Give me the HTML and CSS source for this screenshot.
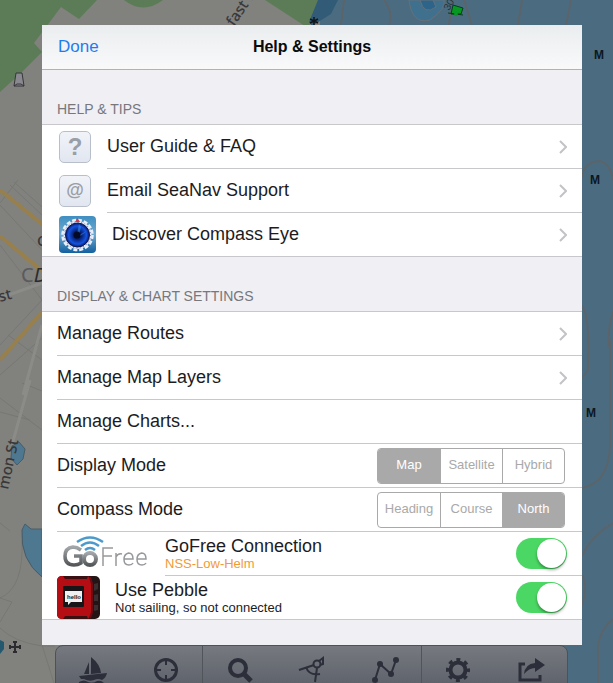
FILE: index.html
```html
<!DOCTYPE html>
<html lang="en">
<head>
    <meta charset="UTF-8">
    <meta name="viewport" content="width=device-width, initial-scale=1.0">
    <title>Help &amp; Settings</title>
    <link rel="stylesheet" href="styles.css">
</head>
<body>
    <!-- Chart behind the panel -->
    <svg class="map" viewBox="0 0 613 683" preserveAspectRatio="xMidYMid slice" aria-hidden="true">
        <rect width="613" height="683" fill="#81817d"/>
        <path d="M320 0H613V683H320Z" fill="#4b6c80"/>
        <path class="park" d="M0 0H97L79 19L61 7L34 43L42 52L22 72L0 92Z"/>
        <path class="park" d="M124 0Q143 15 163 0ZM265 0H322L308 28Z"/>
        <path d="M318 0H338L331 14L312 26L309 22Z" fill="#315b77"/>
        <path d="M409 0Q412 25 430 20Q446 9 444 0Z" fill="#3f718f" stroke="#667078"/>
        <path d="M420 0Q424 16 436 7L433 0Z" fill="#2d6489" stroke="#667078"/>
        <g class="depth">
            <path d="M344 0L341 25M384 0Q394 14 389 25M452 0L449 25M464 0L472 25M522 0L518 25M571 0L566 25"/>
            <path d="M582 178Q583 162 600 161Q610 163 613 180M582 306Q590 314 588 370L582 378M610 340V445Q609 483 582 488M582 556Q591 536 613 523M582 575Q588 585 582 606M613 619Q598 632 598 650V683M613 312Q607 330 609 348"/>
        </g>
        <g class="street">
            <path d="M10 185L42 215M0 205L42 250M18 180L0 203M0 245L42 300M0 345L42 300M0 375L42 338M0 398L42 430M22 383L42 391M0 412L30 420M0 523L10 531M22 540Q24 588 0 598L12 602L0 622M0 628Q14 642 42 646H55M42 645L54 683M14 182L42 207M8 335L42 360"/>
        </g>
        <path class="lane" d="M30 380L12 445M42 325L23 395M0 298L42 283"/>
        <g class="road">
            <path d="M0 190L42 224M0 236L42 271M0 360L42 312"/>
        </g>
        <path class="lake" d="M12 446L19 442L25 449L23 459L17 465L11 458Z"/>
        <path class="lake" d="M22 530L25 524L31 529H42V577Q20 560 22 530Z"/>
        <path d="M0 640L4 642V649L0 654Z" fill="#24586f"/>
        <path d="M16 73H22L24 86H14ZM14 86L17 84H21L24 86" fill="#8b8990" stroke="#35353a"/>
        <path d="M15 642V652M10 647H20M13 642H17M13 652H17M10 645V649M20 645V649" stroke="#2c2c30" stroke-width="2"/>
        <path d="M314 17V25M310 19L318 23M318 19L310 23" stroke="#10161a" stroke-width="1.5"/>
        <path d="M453 5L463 8L461 14H451Z" fill="#079723" stroke="#053d1b"/>
        <path d="M448 13L463 15" stroke="#053d1b"/>
        <circle cx="456" cy="14" r="2" fill="#079723"/>
        <g class="place">
            <text x="234" y="27" transform="rotate(-56 234 27)">fast R</text>
            <text x="0" y="302" transform="rotate(-15 0 302)">st</text>
            <text x="8" y="490" transform="rotate(-78 8 490)">mon St</text>
            <text x="37" y="246">C</text>
            <text x="21" y="282" class="place-big">C<tspan class="place-dark">D</tspan></text>
        </g>
        <text x="449" y="11" class="sounding" transform="rotate(-60 449 11)">30</text>
        <text x="594" y="59" class="mud">M</text>
        <text x="590" y="184" class="mud">M</text>
        <text x="586" y="417" class="mud">M</text>
    </svg>

    <div class="screen">
        <main class="panel">
            <header class="panel-header">
                <button type="button" class="done">Done</button>
                <h1>Help &amp; Settings</h1>
            </header>

            <section>
                <h2>HELP &amp; TIPS</h2>
                <ul class="list">
                    <li class="row row-icon">
                        <span class="key" aria-hidden="true">?</span>
                        <a href="#guide" class="row-body">User Guide &amp; FAQ
                            <svg class="chevron" viewBox="0 0 8 14"><path d="M1 1L7 7L1 13"/></svg>
                        </a>
                    </li>
                    <li class="row row-icon">
                        <span class="key key-at" aria-hidden="true">@</span>
                        <a href="#support" class="row-body">Email SeaNav Support
                            <svg class="chevron" viewBox="0 0 8 14"><path d="M1 1L7 7L1 13"/></svg>
                        </a>
                    </li>
                    <li class="row row-icon">
                        <svg class="app-icon" viewBox="0 0 37 37" aria-hidden="true">
                            <defs>
                                <linearGradient id="sky" x1="0" y1="0" x2="0" y2="1">
                                    <stop offset="0" stop-color="#3f8fc0"/>
                                    <stop offset=".5" stop-color="#6fa9cf"/>
                                    <stop offset="1" stop-color="#12609f"/>
                                </linearGradient>
                                <radialGradient id="iris">
                                    <stop offset="0" stop-color="#020724"/>
                                    <stop offset=".35" stop-color="#061f77"/>
                                    <stop offset=".75" stop-color="#1453e0"/>
                                    <stop offset="1" stop-color="#081a6e"/>
                                </radialGradient>
                            </defs>
                            <rect width="37" height="37" rx="4" fill="url(#sky)"/>
                            <circle cx="18.500" cy="19" r="15" fill="none" stroke="#e8eefa" stroke-width="2.500" stroke-dasharray="4 1.890"/>
                            <circle cx="18.500" cy="19" r="14" fill="#e6ebf7"/>
                            <circle cx="18.500" cy="19" r="13" fill="none" stroke="#5a6aa0" stroke-dasharray="1 2.400"/>
                            <circle cx="18.500" cy="19" r="12" fill="url(#iris)" stroke="#0b1650"/>
                            <path d="M18 18L20 8L22 11L20 19L28 15L20 21Z" fill="#3f9cf2" opacity=".5"/>
                            <circle cx="18" cy="19" r="3.500" fill="#020a25"/>
                            <path d="M16 6L18.500 2L21 6Z" fill="#d8394a"/>
                        </svg>
                        <a href="#compass-eye" class="row-body">Discover Compass Eye
                            <svg class="chevron" viewBox="0 0 8 14"><path d="M1 1L7 7L1 13"/></svg>
                        </a>
                    </li>
                </ul>
            </section>

            <section>
                <h2>DISPLAY &amp; CHART SETTINGS</h2>
                <ul class="list">
                    <li class="row">
                        <a href="#routes" class="row-body">Manage Routes
                            <svg class="chevron" viewBox="0 0 8 14"><path d="M1 1L7 7L1 13"/></svg>
                        </a>
                    </li>
                    <li class="row">
                        <a href="#layers" class="row-body">Manage Map Layers
                            <svg class="chevron" viewBox="0 0 8 14"><path d="M1 1L7 7L1 13"/></svg>
                        </a>
                    </li>
                    <li class="row">
                        <a href="#charts" class="row-body">Manage Charts...</a>
                    </li>
                    <li class="row">
                        <div class="row-body">
                            <span id="displayMode">Display Mode</span>
                            <div class="segments" role="radiogroup" aria-labelledby="displayMode">
                                <label><input type="radio" name="display" checked><span>Map</span></label>
                                <label><input type="radio" name="display"><span>Satellite</span></label>
                                <label><input type="radio" name="display"><span>Hybrid</span></label>
                            </div>
                        </div>
                    </li>
                    <li class="row">
                        <div class="row-body">
                            <span id="compassMode">Compass Mode</span>
                            <div class="segments" role="radiogroup" aria-labelledby="compassMode">
                                <label><input type="radio" name="compass"><span>Heading</span></label>
                                <label><input type="radio" name="compass"><span>Course</span></label>
                                <label><input type="radio" name="compass" checked><span>North</span></label>
                            </div>
                        </div>
                    </li>
                    <li class="row row-gofree">
                        <svg class="gofree" viewBox="0 0 84 34" aria-hidden="true">
                            <defs>
                                <linearGradient id="steel" x1="0" y1="0" x2="0" y2="1">
                                    <stop offset="0" stop-color="#a3a6a9"/>
                                    <stop offset="1" stop-color="#55585b"/>
                                </linearGradient>
                            </defs>
                            <g fill="none" stroke="#4c9acb" stroke-width="2.500">
                                <path d="M13 5Q26 -4 39 5"/>
                                <path d="M17 9Q26 2 35 9"/>
                                <path d="M21 13Q26 9 31 13"/>
                            </g>
                            <path d="M17 13Q13 10 9 10Q1 11 1 19Q1 28 10 28Q14 28 17 26V19H10" fill="none" stroke="url(#steel)" stroke-width="3.500"/>
                            <circle cx="26" cy="22" r="6" fill="none" stroke="url(#steel)" stroke-width="4"/>
                            <g fill="none" stroke="#96999c" stroke-width="1.500">
                                <path d="M39 29V11H49M39 19H48"/>
                                <path d="M52 29V16M52 20Q54 16 58 17"/>
                                <path d="M60 22H69Q69 16 64.500 16Q60 17 60 22.500Q60 28 65 28Q68 28 69 26"/>
                                <path d="M73 22H82Q82 16 77.500 16Q73 17 73 22.500Q73 28 78 28Q81 28 82 26"/>
                            </g>
                        </svg>
                        <div class="row-body">
                            <label for="gofree" class="stack">GoFree Connection <small class="orange">NSS-Low-Helm</small></label>
                            <input type="checkbox" id="gofree" class="switch" checked>
                        </div>
                    </li>
                    <li class="row">
                        <svg class="pebble" viewBox="0 0 43 43" aria-hidden="true">
                            <rect width="43" height="43" rx="5" fill="#251416"/>
                            <path d="M5 0H31L35 5V38L31 43H5Q0 43 0 38V5Q0 0 5 0Z" fill="#b40d14"/>
                            <path d="M6 0H31L30 3H8ZM6 43H31L30 40H8Z" fill="#3b1012"/>
                            <path d="M33 1L35 8V36L33 42" fill="none" stroke="#6d0b10" stroke-width="2"/>
                            <rect x="6" y="10" width="21" height="21" rx="1" fill="#171518"/>
                            <path d="M8 15H25V26H14L11 29V26H8Z" fill="#f0f0f0"/>
                            <text x="10" y="23" class="hello">hello</text>
                            <path d="M37 8L41 7V13L37 15ZM37 19L41 18V25L37 25ZM37 29L41 29V34L37 35Z" fill="#3a3033"/>
                        </svg>
                        <div class="row-body">
                            <label for="pebble" class="stack">Use Pebble <small>Not sailing, so not connected</small></label>
                            <input type="checkbox" id="pebble" class="switch" checked>
                        </div>
                    </li>
                </ul>
            </section>
        </main>

        <nav class="toolbar">
            <button type="button" aria-label="Boat">
                <svg viewBox="0 0 30 28"><path class="solid" d="M13 1Q22 8 23 17L13 18ZM11 6V18H6ZM1 20L29 17Q28 22 24 24Q20 22 16 24Q11 26 6 23H3ZM1 26Q6 23 10 26Q15 28 19 25Q23 24 26 27V28H1Z"/></svg>
            </button>
            <button type="button" aria-label="Centre on position">
                <svg viewBox="0 0 30 28"><circle cx="15" cy="14" r="10.500"/><path d="M15 3V9M15 19V25M4 14H10M20 14H26" stroke-width="2"/></svg>
            </button>
            <button type="button" class="divided" aria-label="Search">
                <svg viewBox="0 0 30 28"><circle cx="14" cy="12" r="8" stroke-width="4"/><path d="M20 18L27 25" stroke-width="5"/></svg>
            </button>
            <button type="button" aria-label="Measure">
                <svg viewBox="0 0 30 28"><g stroke-width="2"><circle cx="20" cy="8" r="3.500"/><path d="M22 5L26 2V8L23 9M17 9L2 14M20 12L18 26M9 11Q12 20 23 18"/></g></svg>
            </button>
            <button type="button" aria-label="Routes">
                <svg viewBox="0 0 30 28"><path d="M5 24L10 8L21 18L26 4" stroke-width="2"/><g class="solid"><circle cx="5" cy="24" r="3"/><circle cx="10" cy="8" r="3"/><circle cx="21" cy="18" r="3"/><circle cx="26" cy="4" r="3"/></g></svg>
            </button>
            <button type="button" class="divided" aria-label="Settings">
                <svg viewBox="0 0 30 28"><circle cx="15" cy="14" r="7.500" stroke-width="4"/><circle cx="15" cy="14" r="10.500" stroke-width="3" stroke-dasharray="4 4.247" stroke-dashoffset="2"/></svg>
            </button>
            <button type="button" aria-label="Share">
                <svg viewBox="0 0 30 28"><path d="M9 8H4V24H24V19"/><path class="solid" d="M19 2L29 9L19 16V12Q13 12 8 18Q9 8 19 7Z"/></svg>
            </button>
        </nav>
    </div>
</body>
</html>
```
FILE: styles.css
```css
* {
    box-sizing: border-box;
}
body {
    margin: 0;
    background-color: #81817d;
    color: #1c1c1e;
    font-family: "Liberation Sans", Arial, sans-serif;
    font-size: 18px;
}
/* Map */
.map {
    position: absolute;
    top: 0;
    left: 0;
    width: 100%;
    height: 100%;
}
.park { fill: #5c7c58; }
.lake { fill: #4d7890; stroke: #4a5c66; }
.depth { fill: none; stroke: #5b646a; stroke-width: 2; }
.street { fill: none; stroke: #777774; stroke-width: 1; }
.lane { fill: none; stroke: #8b8b88; stroke-width: 3; }
.road { fill: none; stroke: #97804d; stroke-width: 4; }
.place { fill: #38383a; font-family: "Noto Sans", sans-serif; font-size: 15px; font-weight: 500; }
.place-big { fill: #5a5a5f; font-size: 20px; font-weight: normal; }
.place-dark { fill: #2c2c2e; font-style: italic; }
.sounding { fill: #26323a; font-size: 10px; }
.mud { fill: #0c1720; font-size: 12px; font-weight: bold; }

.screen {
    position: relative;
    height: 100vh;
    min-height: 683px;
    padding: 25px 31px 0 42px;
    overflow: hidden;
}
/* Panel */
.panel {
    position: relative;
    padding-bottom: 25px;
    background-color: #efeff4;
}
.panel-header {
    display: grid;
    grid-template-columns: 1fr auto 1fr;
    align-items: center;
    height: 45px;
    padding: 0 16px;
    background: linear-gradient(#eaedef, #f9f9fa);
    border-bottom: 1px solid #b2b2b6;
}
.done {
    justify-self: start;
    padding: 0;
    border: none;
    background: none;
    color: #1f7cf0;
    font: inherit;
    font-size: 17px;
    cursor: pointer;
}
h1 {
    margin: 0;
    color: #0b0b0d;
    font-size: 16px;
}
h2 {
    display: flex;
    align-items: flex-end;
    height: 54px;
    margin: 0;
    padding: 0 15px 7px;
    color: #77777c;
    font-size: 14px;
    font-weight: normal;
    line-height: 16px;
}
/* Rows */
.list {
    margin: 0;
    padding: 0;
    list-style: none;
    background-color: white;
    border-top: 1px solid #c8c7cc;
    border-bottom: 1px solid #c8c7cc;
}
.row {
    display: flex;
    align-items: center;
    gap: 15px;
    padding-left: 15px;
}
.row-icon {
    gap: 16px;
    padding-left: 17px;
}
.row-gofree {
    gap: 17px;
    padding-left: 22px;
}
.row-body {
    flex: 1;
    display: flex;
    align-items: center;
    justify-content: space-between;
    height: 44px;
    padding-right: 15px;
    border-bottom: 1px solid #c8c7cc;
    color: inherit;
    text-decoration: none;
}
.row:last-child .row-body {
    height: 43px;
    border-bottom: none;
}
.chevron {
    width: 8px;
    height: 14px;
    fill: none;
    stroke: #c3c3c7;
    stroke-width: 2;
}
.key {
    width: 32px;
    height: 32px;
    border: 1px solid #b9bfca;
    border-radius: 5px;
    background: linear-gradient(#f1f3f8, #e2e6f0);
    color: #9a9ea6;
    font-size: 24px;
    font-weight: bold;
    line-height: 30px;
    text-align: center;
}
.key-at {
    font-size: 18px;
    line-height: 28px;
}
.app-icon {
    width: 37px;
    height: 37px;
}
.gofree {
    width: 84px;
    height: 34px;
    overflow: visible;
}
.pebble {
    width: 43px;
    height: 43px;
}
.hello {
    fill: #222222;
    font-size: 6px;
    font-weight: bold;
}
.stack {
    display: flex;
    flex-direction: column;
    padding-bottom: 1px;
    line-height: 20px;
}
.stack small {
    font-size: 13px;
    line-height: 15px;
}
.stack .orange {
    color: #f19a38;
}
/* Segmented control */
.segments {
    display: grid;
    grid-template-columns: repeat(3, 1fr);
    width: 188px;
    height: 36px;
    margin-right: 2px;
    overflow: hidden;
    border: 1px solid #a9a9a9;
    border-radius: 4px;
    color: #a9a9a9;
    font-size: 13px;
    line-height: 32px;
    text-align: center;
}
.segments label + label {
    border-left: 1px solid #a9a9a9;
}
.segments input {
    position: absolute;
    opacity: 0;
}
.segments span {
    display: block;
    height: 100%;
}
.segments input:checked + span {
    background-color: #a9a9a9;
    color: white;
}
/* Switch */
.switch {
    appearance: none;
    display: flex;
    width: 51px;
    height: 31px;
    margin: 0;
    padding: 1px;
    border-radius: 16px;
    background-color: #d8d8dc;
}
.switch::before {
    content: "";
    width: 29px;
    height: 29px;
    border-radius: 50%;
    background-color: white;
    box-shadow: 0 2px 3px rgba(0, 0, 0, 0.35);
}
.switch:checked {
    justify-content: flex-end;
    background-color: #4bd763;
}
/* Toolbar */
.toolbar {
    display: grid;
    grid-template-columns: repeat(7, 1fr);
    margin: 0 14px 0 13px;
    border: 1px solid #4d5158;
    border-radius: 8px 8px 0 0;
    background: linear-gradient(#76797f, #595d67);
}
.toolbar button {
    display: flex;
    align-items: center;
    justify-content: center;
    height: 48px;
    padding: 0;
    border: none;
    background: none;
    cursor: pointer;
}
.toolbar .divided {
    border-left: 1px solid #50545b;
}
.toolbar svg {
    width: 30px;
    height: 28px;
    fill: none;
    stroke: #2c2f3a;
    stroke-width: 3;
}
.toolbar .solid {
    fill: #2c2f3a;
    stroke: none;
}
```
